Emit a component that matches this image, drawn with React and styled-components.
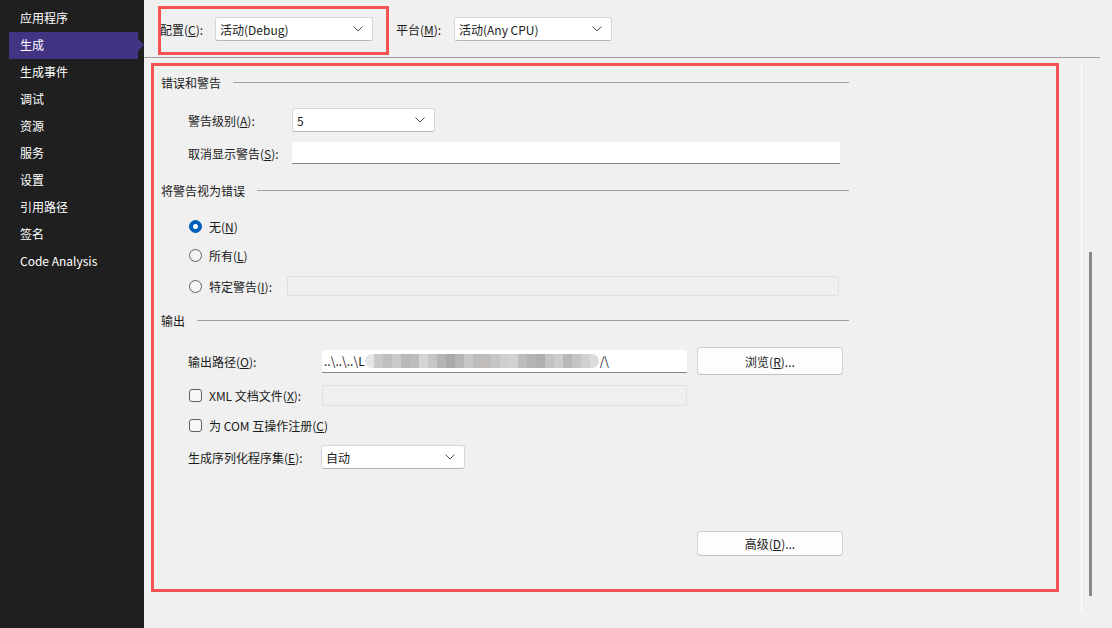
import React from 'react';
import styled, { createGlobalStyle } from 'styled-components';

const Global = createGlobalStyle`
html, body {
  margin: 0;
  padding: 0;
  background: #f0f0f0;
}
body {
  font-family: "Noto Sans CJK SC", "Noto Sans", sans-serif;
  font-size: 12px;
  color: #1a1a1a;
}
`

const Window = styled.div`
display: flex;
width: 1112px;
height: 628px;
overflow: hidden;
`
const Sidebar = styled.div`
width: 144px;
flex-shrink: 0;
background: #1f1f1f;
padding-top: 5px;
box-sizing: border-box;
`
const NavItem = styled.div`
position: relative;
height: 27px;
line-height: 26px;
margin: 0 6px 0 9px;
padding-left: 11px;
color: #ffffff;
background: ${p => p.active ? '#433483' : 'transparent'};
${p => p.active && `
  &::after {
    content: '';
    position: absolute;
    right: -6px;
    top: 7px;
    border-left: 6px solid #433483;
    border-top: 6px solid transparent;
    border-bottom: 6px solid transparent;
  }
`}
`
const Main = styled.div`
flex: 1;
display: flex;
flex-direction: column;
background: #f0f0f0;
`
const TopBar = styled.div`
height: 57px;
display: flex;
align-items: center;
padding: 1px 0 0 16px;
box-sizing: border-box;
`
const Highlight = styled.div`
position: relative;
display: flex;
align-items: center;
&::before {
  content: '';
  position: absolute;
  left: -2px;
  top: -11px;
  width: 225px;
  height: 43px;
  border: 3px solid #f55253;
  pointer-events: none;
}
`
const TopLabel = styled.span`
width: ${p => p.w}px;
flex-shrink: 0;
`
const Separator = styled.div`
height: 1px;
background: #a0a0a0;
margin-right: 12px;
`
const Lower = styled.div`
flex: 1;
display: flex;
`
const Frame = styled.div`
width: 908px;
height: 529px;
margin: 5px 0 0 7px;
border: 3px solid #f55253;
box-sizing: border-box;
padding: 8px 0 0 7px;
display: flex;
flex-direction: column;
`
const Content = styled.div`
width: 688px;
display: flex;
flex-direction: column;
`
const GroupHeader = styled.div`
display: flex;
align-items: center;
height: 16px;
margin-top: ${p => p.mt}px;
gap: 12px;
&::after {
  content: '';
  flex: 1;
  height: 1px;
  background: #a0a0a0;
}
`
const Row = styled.div`
display: flex;
align-items: center;
height: ${p => p.h}px;
margin-top: ${p => p.mt}px;
padding-left: ${p => p.indent ?? 27}px;
`
const Label = styled.span`
width: ${p => p.w}px;
flex-shrink: 0;
white-space: nowrap;
`
const SelectBox = styled.div`
width: ${p => p.w}px;
height: 24px;
box-sizing: border-box;
background: #ffffff;
border: 1px solid #d6d6d6;
border-bottom-color: #b8b8b8;
border-radius: 3px;
display: flex;
align-items: center;
justify-content: space-between;
padding: 0 9px 0 4px;
flex-shrink: 0;
`
const TextBox = styled.div`
width: ${p => p.w}px;
height: ${p => p.h}px;
box-sizing: border-box;
background: #ffffff;
border-bottom: 1px solid #868686;
border-radius: 2px 2px 0 0;
display: flex;
align-items: center;
padding-left: 2px;
overflow: hidden;
white-space: nowrap;
flex-shrink: 0;
`
const DisabledBox = styled.div`
width: ${p => p.w}px;
height: ${p => p.h}px;
box-sizing: border-box;
background: #f0f0f0;
border: 1px solid #e0e0e0;
border-radius: 2px;
margin-left: ${p => p.ml || 0}px;
flex-shrink: 0;
`
const Button = styled.div`
width: 146px;
height: ${p => p.h}px;
box-sizing: border-box;
background: #fdfdfd;
border: 1px solid #d0d0d0;
border-bottom-color: #c2c2c2;
border-radius: 4px;
display: flex;
align-items: center;
justify-content: center;
margin-left: ${p => p.ml || 0}px;
flex-shrink: 0;
`
const Radio = styled.span`
width: 13px;
height: 13px;
box-sizing: border-box;
border-radius: 50%;
margin: 0 7px 0 1px;
flex-shrink: 0;
display: flex;
align-items: center;
justify-content: center;
background: ${p => p.checked ? '#005fb8' : '#f5f5f5'};
border: 1px solid ${p => p.checked ? '#005fb8' : '#5f5f5f'};
&::after {
  content: '';
  width: 5px;
  height: 5px;
  border-radius: 50%;
  background: ${p => p.checked ? '#ffffff' : 'transparent'};
}
`
const Check = styled.span`
width: 13px;
height: 13px;
box-sizing: border-box;
border: 1px solid #5f5f5f;
border-radius: 3px;
background: #f7f7f7;
margin: 0 7px 0 1px;
flex-shrink: 0;
`
const Blur = styled.span`
display: inline-flex;
height: 14px;
border-radius: 7px;
overflow: hidden;
margin-right: 1px;
`
const Pixel = styled.span`
width: 9px;
height: 14px;
`
const ScrollTrack = styled.div`
width: 12px;
height: 549px;
margin: 6px 0 0 22px;
border-left: 1px solid #ffffff;
padding-top: 188px;
box-sizing: border-box;
`
const Thumb = styled.div`
width: 3px;
height: 344px;
margin-left: 7px;
background: #8a8a8a;
`

const Chevron = () => (
  <svg width="10" height="6" viewBox="0 0 10 6">
    <path d="M0.5 0.5 L5 5 L9.5 0.5" fill="none" stroke="#555" strokeWidth="1" />
  </svg>
);

const Select = ({ w, children }) => (
  <SelectBox w={w}>
    <span>{children}</span>
    <Chevron />
  </SelectBox>
);

const blurShades = ['#e6e6e6', '#c9c9c9', '#bfbfbf', '#cacaca', '#b9b9b9', '#bdbdbd', '#d5d5d5', '#c6c6c6',
  '#b4b4b4', '#a9a9a9', '#b6b6b6', '#c7c8c8', '#bcbcbc', '#c1bdbb', '#c4c6c8', '#cfcfcf', '#d2d2d2',
  '#bdbdbd', '#b4b4b4', '#afafaf', '#c3c3c3', '#cdcdcd', '#b8b8b8', '#c4c4c4', '#d0d0d0', '#dcdcdc'];

const navItems = ['应用程序', '生成', '生成事件', '调试', '资源', '服务', '设置', '引用路径', '签名', 'Code Analysis'];

export default function App() {
  return (
    <Window>
      <Global />
      <Sidebar>
        {navItems.map(n => <NavItem key={n} active={n === '生成'}>{n}</NavItem>)}
      </Sidebar>
      <Main>
        <TopBar>
          <Highlight>
            <TopLabel w={55}>配置(<u>C</u>):</TopLabel>
            <Select w={158}>活动(Debug)</Select>
          </Highlight>
          <TopLabel w={58} style={{ marginLeft: 23 }}>平台(<u>M</u>):</TopLabel>
          <Select w={158}>活动(Any CPU)</Select>
        </TopBar>
        <Separator />
        <Lower>
          <Frame>
            <Content>
              <GroupHeader mt={0}>错误和警告</GroupHeader>
              <Row h={24} mt={18}>
                <Label w={104}>警告级别(<u>A</u>):</Label>
                <Select w={143}>5</Select>
              </Row>
              <Row h={22} mt={10}>
                <Label w={104}>取消显示警告(<u>S</u>):</Label>
                <TextBox w={548} h={22} />
              </Row>
              <GroupHeader mt={18}>将警告视为错误</GroupHeader>
              <Row h={20} mt={18}>
                <Radio checked />无(<u>N</u>)
              </Row>
              <Row h={20} mt={9}>
                <Radio />所有(<u>L</u>)
              </Row>
              <Row h={20} mt={11}>
                <Radio />
                <Label w={78}>特定警告(<u>I</u>):</Label>
                <DisabledBox w={552} h={20} />
              </Row>
              <GroupHeader mt={16}>输出</GroupHeader>
              <Row h={28} mt={19}>
                <Label w={134}>输出路径(<u>O</u>):</Label>
                <TextBox w={365} h={23}>
                  ..\..\..\L
                  <Blur>
                    {blurShades.map((c, i) => <Pixel key={i} style={{ background: c }} />)}
                  </Blur>
                  /\
                </TextBox>
                <Button h={28} ml={10}>浏览(<u>R</u>)...</Button>
              </Row>
              <Row h={21} mt={10}>
                <Check />XML 文档文件(<u>X</u>):
                <DisabledBox w={365} h={21} ml={21} />
              </Row>
              <Row h={20} mt={9}>
                <Check />为 COM 互操作注册(<u>C</u>)
              </Row>
              <Row h={24} mt={10}>
                <Label w={133}>生成序列化程序集(<u>E</u>):</Label>
                <Select w={144}>自动</Select>
              </Row>
              <Row h={25} mt={62} indent={536}>
                <Button h={25}>高级(<u>D</u>)...</Button>
              </Row>
            </Content>
          </Frame>
          <ScrollTrack>
            <Thumb />
          </ScrollTrack>
        </Lower>
      </Main>
    </Window>
  );
}
